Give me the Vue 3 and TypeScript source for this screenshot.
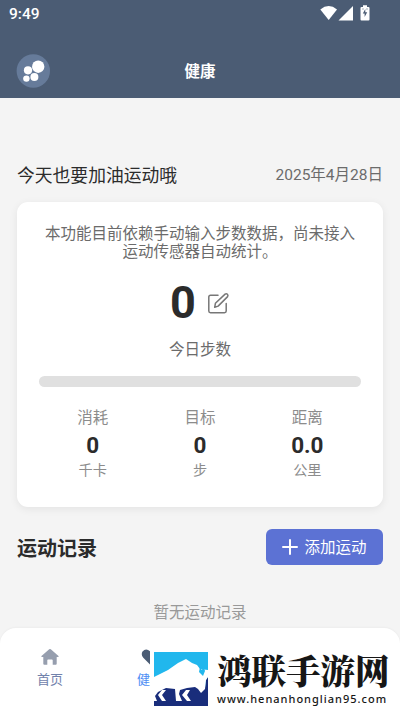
<script setup lang="ts">
interface Stat {
  label: string
  value: string
  unit: string
}

const stats: Stat[] = [
  { label: '消耗', value: '0', unit: '千卡' },
  { label: '目标', value: '0', unit: '步' },
  { label: '距离', value: '0.0', unit: '公里' },
]
const steps = 0
</script>

<template>
  <div class="screen">
    <header class="header">
      <div class="status">
        <span class="time">9:49</span>
        <svg class="status-icons" width="52" height="18" viewBox="0 0 52 18" fill="#fff">
          <path d="M.3 4.500Q8.700-2.300 17 4.500L8.700 15Z" />
          <path d="M33 1v14.500H18.500Z" />
          <path d="M41.500 2H43V.3h4V2h1.500q1 0 1 1v11.500q0 1-1 1h-7q-1 0-1-1V3q0-1 1-1Z" />
          <path d="m45.300 4-2.500 4.500h1.800v3.500l2.600-4.700h-1.900ZM42.500 3.500h1v1h-1ZM46.500 3.500h1v1h-1Z" fill="#4b5c74" />
        </svg>
      </div>
      <div class="title-row">
        <div class="avatar">
          <svg width="34" height="34" viewBox="0 0 34 34">
            <circle cx="17.300" cy="17" r="16.700" fill="#667b9a" />
            <g fill="#fff">
              <circle cx="22.200" cy="12.700" r="6.200" />
              <circle cx="12" cy="16.300" r="4.100" />
              <circle cx="18.400" cy="23" r="4" />
              <circle cx="10.400" cy="24.600" r="3.200" />
            </g>
          </svg>
        </div>
        <h1>健康</h1>
      </div>
    </header>

    <main class="content">
      <div class="greeting">
        <span class="hello">今天也要加油运动哦</span>
        <span class="date">2025年4月28日</span>
      </div>
      <section class="card">
        <p class="note">本功能目前依赖手动输入步数数据，尚未接入<br />运动传感器自动统计。</p>
        <div class="steps">
          <strong>{{ steps }}</strong>
          <svg width="22" height="22" viewBox="0 0 22 22" fill="none" stroke="#777" stroke-width="1.500" stroke-linejoin="round" stroke-linecap="round">
            <path d="M10 3.300H2.500Q.8 3.300.8 5v14Q.8 20.700 2.500 20.700h14q1.700 0 1.700-1.700v-7.500" />
            <path d="m6.700 15.300.7-4L17.100 2.100q1.300-.8 2.300.2t.2 2.300l-9.500 9.500Z" />
          </svg>
        </div>
        <div class="caption">今日步数</div>
        <div class="progress"></div>
        <div class="stats">
          <div v-for="stat in stats" :key="stat.label" class="stat">
            <span class="label">{{ stat.label }}</span>
            <strong>{{ stat.value }}</strong>
            <span class="unit">{{ stat.unit }}</span>
          </div>
        </div>
      </section>
      <div class="records">
        <h2>运动记录</h2>
        <button type="button">
          <svg width="16" height="16" viewBox="0 0 16 16" stroke="#fff" stroke-width="2" stroke-linecap="round">
            <path d="M8 1v14M1 8h14" />
          </svg>
          <span>添加运动</span>
        </button>
      </div>
      <p class="empty">暂无运动记录</p>
    </main>

    <nav class="tabs">
      <div class="tab">
        <svg width="20" height="18" viewBox="0 0 20 18">
          <path d="M9.200 1.300q.8-.7 1.600 0l7.700 6.600q.7.900-.5 1.100h-1.300v6.800q0 1-1 1h-3v-4.500q0-.8-.8-.8H8.100q-.8 0-.8.800v4.500h-3q-1 0-1-1V9H2Q.8 8.800 1.500 7.900Z" fill="#969eae" />
        </svg>
        <span>首页</span>
      </div>
      <div class="tab active">
        <svg width="20" height="18" viewBox="0 0 20 18">
          <path d="M10 16.500 3.300 9.800Q.7 6.800 2.500 3.600 5.800-.5 10 3.200q4.200-3.700 7.500.4 1.800 3.200-.8 6.200Z" fill="#4b5c74" />
        </svg>
        <span>健康</span>
      </div>
    </nav>

    <div class="watermark">
      <svg width="54" height="54" viewBox="0 0 54 54">
        <path d="M0 0h54v54H0Z" fill="#21b7ed" />
        <path d="M0 35h54v19H0Z" fill="#192d7b" />
        <path d="M54 25v15h-9l6-4 1-8Z" fill="#192d7b" />
        <path d="M0 25 4 23 14 18 24 11 32 7 38 11 43 13 46 17 54 18V25L52 28 51 37 47 41 44 37 41 35 33 36 26 38 25 42 28 49H22L21 37 12 36 4 40 1 44 3 49H0Z" fill="#fff" />
        <path d="M36 38h-4l-4 5 5 6h4l-4-6ZM12 38H8l-4 5 4 6h4l-4-6Z" fill="#fff" />
        <path d="M48 9q3 4 2 7l1 3-2 5-4-4 1-5q1 3 2 3 1-2 0-9Z" fill="#21b7ed" />
      </svg>
      <div class="mark-text">
        <span class="site-name">鸿联手游网</span>
        <span class="site-url">www.henanhonglian95.com</span>
      </div>
    </div>
  </div>
</template>

<style>
body {
  margin: 0;
  overflow: hidden;
}
</style>

<style scoped>
* {
  box-sizing: border-box;
}
.screen {
  position: relative;
  display: flex;
  flex-direction: column;
  width: 400px;
  height: 711px;
  overflow: hidden;
  background: #f4f4f4;
  font-family: Roboto, "Noto Sans CJK SC", sans-serif;
  color: #2b2b2b;
}
svg {
  display: block;
  flex: none;
}
.header {
  height: 98px;
  flex: none;
  background: #4b5c74;
  color: #fff;
}
.status {
  display: flex;
  justify-content: space-between;
  height: 44px;
  padding: 5px 28px 0 9px;
}
.time {
  font-size: 15.500px;
  font-weight: 500;
  line-height: 18px;
}
.title-row {
  display: grid;
  grid-template-columns: 1fr auto 1fr;
  align-items: center;
  height: 54px;
  padding: 0 16px;
}
h1 {
  margin: 2px 0 0;
  font-size: 15.500px;
  line-height: 22px;
}
.content {
  flex: 1;
  padding: 61px 17px 0;
}
.greeting {
  display: flex;
  align-items: center;
  justify-content: space-between;
  height: 29px;
}
.hello {
  font-size: 17.800px;
}
.date {
  margin-top: -2px;
  font-size: 15.500px;
  color: #6b6b6b;
}
.card {
  height: 305px;
  margin-top: 14px;
  padding: 23px 22px 0;
  border-radius: 11px;
  background: #fff;
  box-shadow: 0 2px 8px #00000012;
}
.note {
  margin: 0 -8px;
  font-size: 15.500px;
  line-height: 18px;
  text-align: center;
  color: #6b6b6b;
}
.steps {
  display: flex;
  align-items: center;
  justify-content: center;
  gap: 12px;
  height: 46px;
  margin-top: 19px;
}
.steps strong {
  font-size: 45px;
  line-height: 46px;
}
.caption {
  margin-top: 13px;
  font-size: 15.500px;
  line-height: 22px;
  text-align: center;
  color: #6b6b6b;
}
.progress {
  height: 11px;
  margin-top: 15px;
  border-radius: 6px;
  background: #e0e0e0;
}
.stats {
  display: grid;
  grid-template-columns: repeat(3, 1fr);
  margin-top: 20px;
}
.stat {
  display: flex;
  flex-direction: column;
  align-items: center;
  color: #8c8c8c;
}
.label {
  font-size: 15.500px;
  line-height: 22px;
}
.stat strong {
  margin: 3px 0 2px;
  font-size: 22.500px;
  line-height: 26px;
  color: #2b2b2b;
}
.unit {
  font-size: 14.200px;
  line-height: 20px;
}
.records {
  display: flex;
  align-items: center;
  justify-content: space-between;
  height: 36px;
  margin-top: 22px;
}
h2 {
  margin: 4px 0 0;
  font-size: 20px;
  line-height: 28px;
}
button {
  display: flex;
  align-items: center;
  justify-content: center;
  gap: 6px;
  width: 117px;
  height: 36px;
  padding: 0;
  border: 0;
  border-radius: 6px;
  background: #5c72d4;
  color: #fff;
  font-family: inherit;
  font-size: 15.500px;
}
button span {
  margin-top: -2px;
}
.empty {
  margin: 37px 0 0;
  font-size: 15.500px;
  line-height: 22px;
  text-align: center;
  color: #999;
}
.tabs {
  display: grid;
  grid-template-columns: repeat(4, 1fr);
  flex: none;
  height: 83px;
  padding-top: 20px;
  border-radius: 16px 16px 0 0;
  background: #fff;
  box-shadow: 0 -1px 2px #00000008;
}
.tab {
  display: flex;
  flex-direction: column;
  align-items: center;
  gap: 4px;
  font-size: 13px;
  line-height: 19px;
  color: #7182ab;
}
.active {
  color: #4c8cf4;
}
.watermark {
  position: absolute;
  left: 150px;
  bottom: 0;
  display: flex;
  gap: 9px;
  width: 242px;
  height: 62px;
  padding: 3px 0 0 4px;
  background: #fff;
}
.mark-text {
  display: flex;
  flex-direction: column;
  margin-top: -2px;
  color: #161616;
  white-space: nowrap;
}
.site-name {
  font-family: "Noto Serif CJK SC", "Noto Sans CJK SC", serif;
  font-size: 34.500px;
  font-weight: 900;
  line-height: 39px;
}
.site-url {
  margin-top: 2px;
  font-family: "Noto Sans", "Open Sans", sans-serif;
  font-size: 11px;
  font-weight: 500;
  letter-spacing: 1px;
  line-height: 16px;
}
</style>
